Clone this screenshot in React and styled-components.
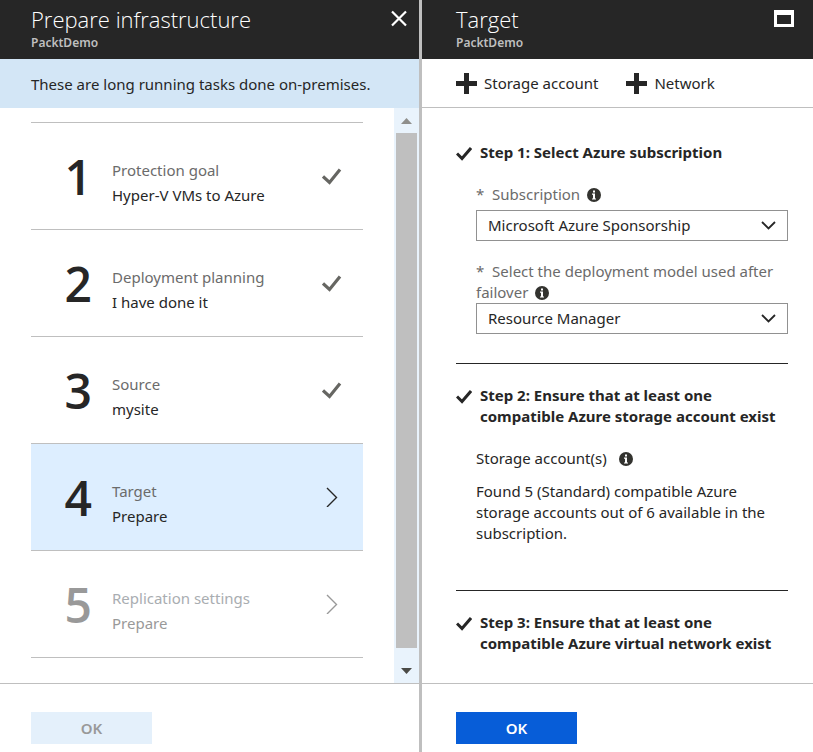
import React from "react";
import styled, { createGlobalStyle } from "styled-components";

const GlobalStyle = createGlobalStyle`
  *, *::before, *::after { box-sizing: border-box; }
  body {
    margin: 0;
    background: #fff;
    color: #262626;
    font-family: "Noto Sans", "Open Sans", sans-serif;
    font-size: 15px;
    line-height: 21px;
  }
  button, select { font: inherit; color: inherit; }
  :where(h1, h2, p, ol) { margin: 0; padding: 0; }
`;

const Page = styled.main`
  display: grid;
  grid-template-columns: minmax(0, 422fr) minmax(0, 391fr);
  min-height: 100vh;
`;

const Blade = styled.section`
  display: flex;
  flex-direction: column;
  min-width: 0;
  border-right: ${(p) => (p.$divided ? "3px solid #bfbfbf" : "0")};
`;

const BladeHeader = styled.header`
  display: flex;
  justify-content: space-between;
  align-items: flex-start;
  height: 59px;
  padding: 4px ${(p) => p.$end}px 0 ${(p) => p.$start}px;
  background: #262626;
  color: #fff;
`;

const Title = styled.h1`
  font-family: "Open Sans", sans-serif;
  font-size: 22px;
  font-weight: 300;
  line-height: 30px;
`;

const Subtitle = styled.p`
  font-size: 12px;
  font-weight: 600;
  line-height: 17px;
  color: #bfbfbf;
`;

const IconButton = styled.button`
  display: flex;
  margin-top: ${(p) => p.$top}px;
  padding: 0;
  border: 0;
  background: none;
  color: #fff;
`;

const Banner = styled.p`
  padding: 15px 20px 13px 31px;
  background: #d3e6f6;
`;

const Toolbar = styled.div`
  display: flex;
  align-items: center;
  gap: 28px;
  height: 49px;
  padding: 0 34px;
  border-bottom: 1px solid #bfbfbf;
`;

const ToolButton = styled.button`
  display: flex;
  align-items: center;
  gap: 7px;
  padding: 0;
  border: 0;
  background: none;
  white-space: nowrap;
`;

const ScrollArea = styled.div`
  flex: 1;
  display: grid;
  grid-template-columns: minmax(0, 1fr) 25px;
`;

const StepList = styled.ol`
  list-style: none;
  padding: 14px 31px 0;
`;

const StepItem = styled.li`
  border-bottom: 1px solid #bfbfbf;
  &:first-child { border-top: 1px solid #bfbfbf; }
`;

const StepButton = styled.button`
  display: grid;
  grid-template-columns: 44px minmax(0, 1fr) 20px;
  column-gap: 20px;
  align-items: center;
  width: 100%;
  height: 106px;
  padding: 0 21px 0 17px;
  border: 0;
  text-align: left;
  background: ${(p) => (p.$active ? "#ddeeff" : "transparent")};
  color: ${(p) => (p.disabled ? "#999" : "#262626")};
`;

const StepNumber = styled.span`
  padding-top: 2px;
  font-family: "Open Sans", sans-serif;
  font-size: 48px;
  font-weight: 600;
  line-height: 66px;
  text-align: right;
`;

const StepText = styled.span`
  display: flex;
  flex-direction: column;
  gap: 4px;
  padding-top: 14px;
`;

const StepName = styled.span`
  color: ${(p) => (p.$muted ? "#a9adb1" : "#6b6b6b")};
`;

const ScrollBar = styled.div`
  display: flex;
  flex-direction: column;
  background: #e9f3fc;
`;

const ScrollButton = styled.button`
  display: flex;
  align-items: center;
  justify-content: center;
  height: ${(p) => p.$size}px;
  padding: ${(p) => p.$size - 25}px 0 0;
  border: 0;
  background: none;
  color: ${(p) => p.$tone};
`;

const Thumb = styled.div`
  flex: 1;
  margin: 0 2px;
  background: #bfbfbf;
`;

const Body = styled.div`
  flex: 1;
  padding: 34px 25px 29px 34px;
`;

const Step = styled.section`
  padding-bottom: ${(p) => p.$bottom}px;
`;

const Divider = styled.hr`
  margin: 0 0 21px;
  border: 0;
  border-top: 1px solid #262626;
`;

const StepHeading = styled.h2`
  display: grid;
  grid-template-columns: 16px minmax(0, 1fr);
  column-gap: 8px;
  font-size: 15px;
  font-weight: 700;
  line-height: 21px;
  svg { margin-top: 4px; }
`;

const Field = styled.div`
  margin: ${(p) => p.$top}px 0 0 20px;
`;

const Label = styled.label`
  display: block;
  margin-bottom: ${(p) => p.$gap}px;
  color: #6b6b6b;
`;

const SelectBox = styled.div`
  display: grid;
  align-items: center;
  > * { grid-area: 1 / 1; }
  svg { justify-self: end; margin-right: 12px; pointer-events: none; }
`;

const Select = styled.select`
  appearance: none;
  width: 100%;
  height: 31px;
  padding: 0 36px 0 11px;
  border: 1px solid #919191;
  border-radius: 0;
  background: #fff;
`;

const Note = styled.p`
  margin: ${(p) => p.$top}px 0 0 20px;
`;

const InfoSvg = styled.svg`
  margin-left: ${(p) => p.$space}px;
  vertical-align: -2px;
`;

const Footer = styled.footer`
  height: 69px;
  padding: 28px ${(p) => p.$start}px 0;
  border-top: 1px solid #bfbfbf;
`;

const OkButton = styled.button`
  width: 121px;
  height: 32px;
  padding: 0;
  border: 0;
  font-weight: 600;
  background: #075dd8;
  color: #fff;
  &:disabled { background: #e4f0fb; color: #999; }
`;

const CloseIcon = () => (
  <svg width="18" height="18" viewBox="0 0 18 18" aria-hidden="true">
    <path d="M2 2.5 16 16.5M16 2.5 2 16.5" fill="none" stroke="currentColor" strokeWidth="2.2" />
  </svg>
);

const MaximizeIcon = () => (
  <svg width="20" height="17" viewBox="0 0 20 17" aria-hidden="true">
    <path d="M0 0H20V17H0ZM3 5V14H17V5Z" fill="currentColor" fillRule="evenodd" />
  </svg>
);

const PlusIcon = () => (
  <svg width="21" height="21" viewBox="0 0 21 21" aria-hidden="true">
    <path d="M8 0H13V8H21V13H13V21H8V13H0V8H8Z" fill="currentColor" />
  </svg>
);

const DoneIcon = () => (
  <svg width="20" height="18" viewBox="0 0 20 18" aria-hidden="true">
    <path d="M1 9.5 7.5 15.5 18 2.5" fill="none" stroke="#666662" strokeWidth="3.2" />
  </svg>
);

const NextIcon = () => (
  <svg width="20" height="20" viewBox="0 0 20 20" aria-hidden="true">
    <path d="M5 1 14.5 10.5 5 20" fill="none" stroke="currentColor" strokeWidth="1.4" />
  </svg>
);

const HeadingCheck = () => (
  <svg width="16" height="15" viewBox="0 0 16 15" aria-hidden="true">
    <path d="M1 7.5 6 12.5 15 2" fill="none" stroke="currentColor" strokeWidth="3" />
  </svg>
);

const ChevronIcon = () => (
  <svg width="15" height="9" viewBox="0 0 15 9" aria-hidden="true">
    <path d="M1 1 7.5 7.5 14 1" fill="none" stroke="#262626" strokeWidth="1.8" />
  </svg>
);

const ArrowIcon = ({ down }) => (
  <svg width="11" height="6" viewBox="0 0 11 6" aria-hidden="true">
    <path d={down ? "M0 0H11L5.5 6Z" : "M0 6H11L5.5 0Z"} fill="currentColor" />
  </svg>
);

const InfoIcon = ({ space }) => (
  <InfoSvg $space={space} width="14" height="14" viewBox="0 0 14 14" aria-hidden="true">
    <circle cx="7" cy="7" r="7" fill="#33332f" />
    <path d="M6 2.4H8V4.4H6ZM5 5.6H8V10.4H9V11.6H5V10.4H6V6.8H5Z" fill="#fff" />
  </InfoSvg>
);

const steps = [
  { name: "Protection goal", value: "Hyper-V VMs to Azure", state: "done" },
  { name: "Deployment planning", value: "I have done it", state: "done" },
  { name: "Source", value: "mysite", state: "done" },
  { name: "Target", value: "Prepare", state: "active" },
  { name: "Replication settings", value: "Prepare", state: "disabled" },
];

export default function App() {
  return (
    <>
      <GlobalStyle />
      <Page>
        <Blade $divided>
          <BladeHeader $start={31} $end={11}>
            <div>
              <Title>Prepare infrastructure</Title>
              <Subtitle>PacktDemo</Subtitle>
            </div>
            <IconButton $top={5} aria-label="Close"><CloseIcon /></IconButton>
          </BladeHeader>
          <Banner>These are long running tasks done on-premises.</Banner>
          <ScrollArea>
            <StepList>
              {steps.map((step, i) => (
                <StepItem key={step.name}>
                  <StepButton $active={step.state === "active"} disabled={step.state === "disabled"}>
                    <StepNumber>{i + 1}</StepNumber>
                    <StepText>
                      <StepName $muted={step.state === "disabled"}>{step.name}</StepName>
                      <span>{step.value}</span>
                    </StepText>
                    {step.state === "done" ? <DoneIcon /> : <NextIcon />}
                  </StepButton>
                </StepItem>
              ))}
            </StepList>
            <ScrollBar>
              <ScrollButton $size={25} $tone="#8f8f8c" aria-label="Scroll up"><ArrowIcon /></ScrollButton>
              <Thumb />
              <ScrollButton $size={35} $tone="#4a4a46" aria-label="Scroll down"><ArrowIcon down /></ScrollButton>
            </ScrollBar>
          </ScrollArea>
          <Footer $start={31}>
            <OkButton disabled>OK</OkButton>
          </Footer>
        </Blade>

        <Blade>
          <BladeHeader $start={34} $end={19}>
            <div>
              <Title>Target</Title>
              <Subtitle>PacktDemo</Subtitle>
            </div>
            <IconButton $top={6} aria-label="Maximize"><MaximizeIcon /></IconButton>
          </BladeHeader>
          <Toolbar>
            <ToolButton><PlusIcon />Storage account</ToolButton>
            <ToolButton><PlusIcon />Network</ToolButton>
          </Toolbar>
          <Body>
            <Step $bottom={29}>
              <StepHeading><HeadingCheck /><span>Step 1: Select Azure subscription</span></StepHeading>
              <Field $top={21}>
                <Label htmlFor="subscription" $gap={5}>
                  *&nbsp; Subscription<InfoIcon space={7} />
                </Label>
                <SelectBox>
                  <Select id="subscription"><option>Microsoft Azure Sponsorship</option></Select>
                  <ChevronIcon />
                </SelectBox>
              </Field>
              <Field $top={20}>
                <Label htmlFor="model" $gap={0}>
                  *&nbsp; Select the deployment model used after failover<InfoIcon space={7} />
                </Label>
                <SelectBox>
                  <Select id="model"><option>Resource Manager</option></Select>
                  <ChevronIcon />
                </SelectBox>
              </Field>
            </Step>
            <Divider />
            <Step $bottom={46}>
              <StepHeading>
                <HeadingCheck /><span>Step 2: Ensure that at least one compatible Azure storage account exist</span>
              </StepHeading>
              <Note $top={21}>Storage account(s)<InfoIcon space={12} /></Note>
              <Note $top={12}>
                Found 5 (Standard) compatible Azure storage accounts out of 6 available in the subscription.
              </Note>
            </Step>
            <Divider />
            <Step $bottom={0}>
              <StepHeading>
                <HeadingCheck /><span>Step 3: Ensure that at least one compatible Azure virtual network exist</span>
              </StepHeading>
            </Step>
          </Body>
          <Footer $start={34}>
            <OkButton>OK</OkButton>
          </Footer>
        </Blade>
      </Page>
    </>
  );
}
